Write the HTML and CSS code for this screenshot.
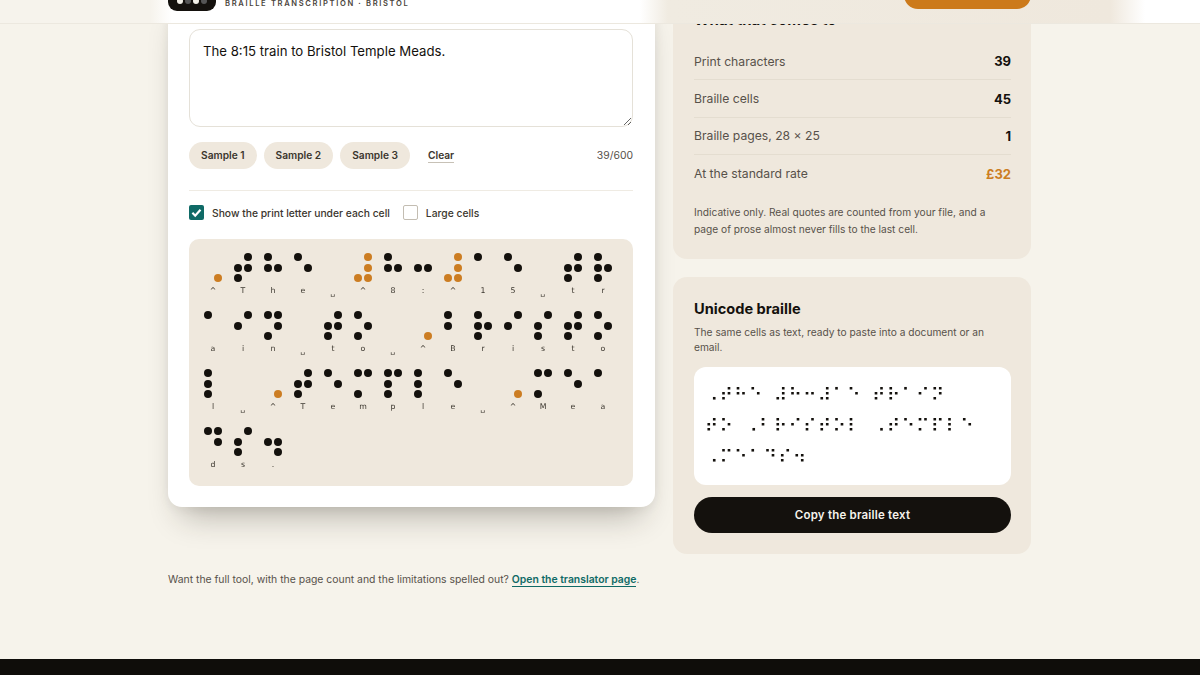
FILE: index.html
```html
<!DOCTYPE html>
<html lang="en">
<head>
<meta charset="utf-8">
<title>Braille transcription</title>
<link rel="stylesheet" href="styles.css">
</head>
<body>
<header class="site-header">
  <div class="brand">
    <span class="logo"><i class="ld on"></i><i class="ld"></i><i class="ld on"></i><i class="ld"></i></span>
    <span class="tagline">BRAILLE TRANSCRIPTION · BRISTOL</span>
  </div>
  <a class="cta"></a>
</header>
<main class="layout">
  <section class="card tool">
    <textarea class="input" spellcheck="false">The 8:15 train to Bristol Temple Meads.</textarea>
    <div class="actions">
      <button class="pill">Sample 1</button>
      <button class="pill">Sample 2</button>
      <button class="pill">Sample 3</button>
      <button class="clear">Clear</button>
      <span class="count">39/600</span>
    </div>
    <div class="options">
      <label class="opt"><span class="box checked"><svg viewBox="0 0 15 15" width="15" height="15"><path d="M3.4 7.8l2.8 2.9 5.3-6" fill="none" stroke="#fff" stroke-width="2.2"/></svg></span>Show the print letter under each cell</label>
      <label class="opt"><span class="box"></span>Large cells</label>
    </div>
    <div class="cells" id="cells"></div>
  </section>
  <aside class="side">
    <section class="panel stats">
      <h2 class="title">What that comes to</h2>
      <dl class="rows">
        <div class="row"><dt>Print characters</dt><dd>39</dd></div>
        <div class="row"><dt>Braille cells</dt><dd>45</dd></div>
        <div class="row"><dt>Braille pages, 28 × 25</dt><dd>1</dd></div>
        <div class="row last"><dt>At the standard rate</dt><dd class="price">£32</dd></div>
      </dl>
      <p class="small">Indicative only. Real quotes are counted from your file, and a page of prose almost never fills to the last cell.</p>
    </section>
    <section class="panel unicode">
      <h2 class="title big">Unicode braille</h2>
      <p class="small desc">The same cells as text, ready to paste into a document or an email.</p>
      <div class="output">⠠⠞⠓⠑ ⠼⠓⠒⠼⠁⠑ ⠞⠗⠁⠊⠝<br>⠞⠕ ⠠⠃⠗⠊⠎⠞⠕⠇ ⠠⠞⠑⠍⠏⠇⠑<br>⠠⠍⠑⠁⠙⠎⠲</div>
      <button class="copy">Copy the braille text</button>
    </section>
  </aside>
</main>
<p class="note">Want the full tool, with the page count and the limitations spelled out? <a class="link">Open the translator page</a>.</p>
<footer class="site-footer"></footer>
<script src="cells.js"></script>
</body>
</html>
```
FILE: styles.css
```css
* { box-sizing: border-box; }
html, body { margin: 0; height: 675px; overflow: hidden; }
body { background: #f6f3eb; color: #14110d; font-family: "Inter", "Liberation Sans", sans-serif; }

.site-header {
  position: fixed; top: 0; left: 0; right: 0; height: 24px; z-index: 5; overflow: hidden;
  display: flex; justify-content: space-between; align-items: flex-end;
  padding: 0 169px 0 168px;
  border-bottom: 1px solid #ece8df;
  background: linear-gradient(90deg, #f6f3ec 0, #f6f3ec 150px, #fdfcfa 166px, #fff 172px, #fff 640px, #f0ebe1 668px, #efe8dd 1110px, #fff 1145px);
}
.brand { display: flex; align-items: flex-end; gap: 9px; }
.logo {
  width: 48px; height: 30px; margin-bottom: 12px; border-radius: 9px; background: #14110d;
  display: flex; justify-content: center; align-items: flex-end; gap: 2px; padding-bottom: 7px;
}
.ld { width: 6px; height: 6px; border-radius: 50%; background: #555; }
.ld.on { background: #f3f0e8; }
.tagline {
  font-family: "Inter", sans-serif; font-size: 7.6px; font-weight: 600; letter-spacing: 1.65px; color: #4a443b;
  margin-bottom: 15px; line-height: 9px;
}
.cta { width: 127px; height: 30px; margin-bottom: 14px; border-radius: 14px; background: #cc7a1b; }

.layout {
  display: grid; grid-template-columns: 487px 358px; gap: 18px; align-items: start;
  margin: -9px 0 0 168px;
}
.card {
  background: #fff; border-radius: 14px; padding: 38px 22px 21px 21px;
  box-shadow: 0 22px 30px -14px rgba(40, 35, 25, .32), 0 2px 12px rgba(40, 35, 25, .06);
}
.input {
  display: block; width: 100%; height: 98px; padding: 12px 13px;
  border: 1.5px solid #e5e1d8; border-radius: 11px; background: #fff; color: #14110d;
  font: 400 13.2px/18px "Inter", sans-serif; outline: none;
}
.actions { display: flex; align-items: center; gap: 7px; margin-top: 15px; }
.pill {
  height: 27px; padding: 0 12px 2px; border: 0; border-radius: 14px; background: #efe8dd; color: #3b362e;
  font: 600 10.2px "Inter", sans-serif;
}
.clear {
  margin-left: 11px; padding: 1px 0 1px; border: 0; border-bottom: 1px solid #c7c1b6; background: none; color: #3b362e;
  font: 600 10.2px "Inter", sans-serif;
}
.count { margin-left: auto; font-size: 10.4px; color: #57514a; }
.options {
  display: flex; align-items: center; gap: 13px; margin-top: 21px; padding-top: 14px; border-top: 1px solid #efebe3;
}
.opt { display: flex; align-items: center; gap: 8px; font-size: 10.3px; font-weight: 500; color: #3b362e; height: 15px; }
.box { width: 15px; height: 15px; border: 1px solid #c3bdb2; border-radius: 2px; background: #fff; flex: none; }
.box.checked { border: 0; background: #0f6a66; display: block; }
.box svg { display: block; }
.cells {
  margin-top: 19px; height: 247px; padding: 14px 14px 0 9px; border-radius: 10px; background: #efe8dd;
  display: grid; grid-template-columns: repeat(14, 30px); grid-auto-rows: 58px; align-content: start; justify-content: start;
  will-change: transform;
}
.cell { display: flex; flex-direction: column; align-items: center; width: 30px; }
.dots { display: grid; grid-template-columns: 8px 8px; grid-template-rows: 8px 8px 8px; gap: 2.6px; height: 29px; }
.dot { width: 8px; height: 8px; border-radius: 50%; }
.dot.on { background: #14110d; }
.dot.sign { background: #cc7d22; }
.letter { margin-top: 4px; font: 500 7.8px/10px "DejaVu Sans", sans-serif; color: #3b362e; }
.letter.gap { margin-top: 6px; font-size: 8px; }

.side { display: flex; flex-direction: column; gap: 18px; }
.panel { background: #efe8dd; border-radius: 14px; padding: 19px 20px 21px 21px; }
.title { margin: 0; font-size: 15px; line-height: 20px; font-weight: 700; color: #14110d; }
.rows { margin: 13px 0 0; }
.row {
  display: flex; justify-content: space-between; align-items: center; height: 37.4px; border-bottom: 1px solid #e4ddd0;
}
.row.last { border-bottom: 0; }
.row dt { font-size: 12.2px; color: #57514a; }
.row dd { margin: 0; font-size: 13px; font-weight: 700; color: #14110d; }
.row dd.price { color: #cc7d22; }
.small { margin: 11.4px 0 0; font-size: 10.2px; line-height: 17px; color: #57514a; }
.desc { margin: 5px 0 0; line-height: 15px; }
.unicode { padding-top: 21px; padding-bottom: 21px; }
.big { font-size: 14.6px; line-height: 22px; }
.output {
  margin-top: 12px; height: 118px; padding: 12px 11px; border-radius: 12px; background: #fff;
  font: 400 18px/31px "DejaVu Sans", sans-serif; letter-spacing: 1.5px; word-spacing: 3px; color: #14110d;
  will-change: transform;
}
.copy {
  display: block; width: 100%; height: 36px; margin-top: 12px; border: 0; border-radius: 18px; background: #14110d; color: #f6f3eb;
  font: 600 11.5px "Inter", sans-serif; letter-spacing: .2px;
}
.note { margin: 18px 0 0 168px; font-size: 10.4px; line-height: 16px; color: #57514a; }
.link { color: #0f6a66; font-weight: 600; border-bottom: 1px solid #0f6a66; }
.site-footer { height: 20px; margin-top: 71px; background: #0f0d0a; }
```
FILE: cells.js
```js
var data = [
  ["^",[6],1],["T",[2,3,4,5]],["h",[1,2,5]],["e",[1,5]],["␣",[]],["^",[3,4,5,6],1],["8",[1,2,5]],[":",[2,5]],["^",[3,4,5,6],1],["1",[1]],["5",[1,5]],["␣",[]],["t",[2,3,4,5]],["r",[1,2,3,5]],
  ["a",[1]],["i",[2,4]],["n",[1,3,4,5]],["␣",[]],["t",[2,3,4,5]],["o",[1,3,5]],["␣",[]],["^",[6],1],["B",[1,2]],["r",[1,2,3,5]],["i",[2,4]],["s",[2,3,4]],["t",[2,3,4,5]],["o",[1,3,5]],
  ["l",[1,2,3]],["␣",[]],["^",[6],1],["T",[2,3,4,5]],["e",[1,5]],["m",[1,3,4]],["p",[1,2,3,4]],["l",[1,2,3]],["e",[1,5]],["␣",[]],["^",[6],1],["M",[1,3,4]],["e",[1,5]],["a",[1]],
  ["d",[1,4,5]],["s",[2,3,4]],[".",[2,5,6]]
];
var order = [1,4,2,5,3,6];
var root = document.getElementById("cells");
data.forEach(function (c) {
  var cell = document.createElement("div"); cell.className = "cell";
  var dots = document.createElement("div"); dots.className = "dots";
  order.forEach(function (n) {
    var d = document.createElement("span");
    d.className = "dot" + (c[1].indexOf(n) >= 0 ? (c[2] ? " sign" : " on") : "");
    dots.appendChild(d);
  });
  var l = document.createElement("span");
  l.className = "letter" + (c[0] === "␣" ? " gap" : "");
  l.textContent = c[0];
  cell.appendChild(dots); cell.appendChild(l);
  root.appendChild(cell);
});
```
